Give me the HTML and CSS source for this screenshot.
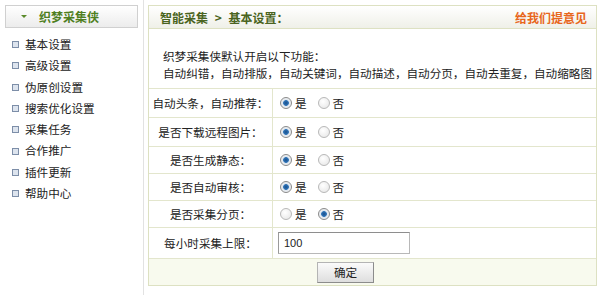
FILE: index.html
```html
<!DOCTYPE html>
<html lang="zh">
<head>
<meta charset="utf-8">
<link rel="stylesheet" href="styles.css">
</head>
<body>
<div class="page">
  <aside class="side">
    <div class="side-head"><span class="arrow"></span><span class="side-title">织梦采集侠</span></div>
    <ul class="menu">
      <li>基本设置</li>
      <li>高级设置</li>
      <li>伪原创设置</li>
      <li>搜索优化设置</li>
      <li>采集任务</li>
      <li>合作推广</li>
      <li>插件更新</li>
      <li>帮助中心</li>
    </ul>
  </aside>
  <main class="panel">
    <div class="panel-head">
      <span class="crumb">智能采集 <span class="sep">&gt;</span> 基本设置：</span>
      <span class="feedback">给我们提意见</span>
    </div>
    <div class="intro">
      <p>织梦采集侠默认开启以下功能：</p>
      <p>自动纠错，自动排版，自动关键词，自动描述，自动分页，自动去重复，自动缩略图</p>
    </div>
    <div class="form">
      <div class="row r29"><div class="label">自动头条，自动推荐：</div><div class="val"><label class="opt"><input type="radio" name="a" checked>是</label><label class="opt"><input type="radio" name="a">否</label></div></div>
      <div class="row r29"><div class="label">是否下载远程图片：</div><div class="val"><label class="opt"><input type="radio" name="b" checked>是</label><label class="opt"><input type="radio" name="b">否</label></div></div>
      <div class="row r27"><div class="label">是否生成静态：</div><div class="val"><label class="opt"><input type="radio" name="c" checked>是</label><label class="opt"><input type="radio" name="c">否</label></div></div>
      <div class="row r27"><div class="label">是否自动审核：</div><div class="val"><label class="opt"><input type="radio" name="d" checked>是</label><label class="opt"><input type="radio" name="d">否</label></div></div>
      <div class="row r27"><div class="label">是否采集分页：</div><div class="val"><label class="opt"><input type="radio" name="e">是</label><label class="opt"><input type="radio" name="e" checked>否</label></div></div>
      <div class="row r31"><div class="label">每小时采集上限：</div><div class="val"><input class="txt" type="text" value="100"></div></div>
      <div class="row r27 foot"><div class="label"></div><div class="val"><button class="btn" type="button">确定</button></div></div>
    </div>
  </main>
</div>
</body>
</html>
```
FILE: styles.css
```css
* { box-sizing: border-box; }
html, body { margin: 0; padding: 0; background: #fff; }
body {
  width: 600px;
  height: 295px;
  overflow: hidden;
  font-family: "Noto Sans CJK SC", "Noto Sans", sans-serif;
  font-size: 11.6px;
  color: #222;
}
.page { display: flex; height: 295px; }

.side {
  width: 144px;
  padding: 5px 5px 0 5px;
  border-right: 1px solid #e2e2e2;
  flex: none;
}
.side-head {
  width: 133px;
  height: 23px;
  border: 1px solid #d0d0d0;
  background: linear-gradient(#ffffff, #ececec);
  display: flex;
  align-items: center;
  padding-left: 15px;
}
.arrow {
  width: 0; height: 0;
  border-left: 3px solid transparent;
  border-right: 3px solid transparent;
  border-top: 3px solid #5a8a2a;
  margin-right: 12px;
}
.side-title { font-weight: bold; color: #4f7f1f; font-size: 12px; }
.menu { list-style: none; margin: 6px 0 0 0; padding: 0; }
.menu li {
  height: 21.3px;
  line-height: 21.3px;
  display: flex;
  align-items: center;
  color: #222;
}
.menu li::before {
  content: "";
  width: 5px; height: 5px;
  border: 1px solid #7d8ea8;
  background: #dde4ee;
  margin: 0 6px 0 7px;
  flex: none;
}

.panel {
  margin: 5px 0 0 4px;
  width: 449px;
  height: 281px;
  border: 1px solid #dde1c2;
  display: flex;
  flex-direction: column;
}
.panel-head {
  height: 23px;
  border-bottom: 1px solid #dde1c2;
  background: linear-gradient(#ffffff, #eff0e8);
  display: flex;
  align-items: center;
  justify-content: space-between;
  padding: 0 9px 0 11px;
  font-weight: bold;
  font-size: 12px;
}
.crumb { color: #4a6420; }
.sep { margin: 0 4px; }
.feedback { color: #e8661c; }

.intro { padding: 19px 0 5px 14px; height: 59px; }
.intro p { margin: 0; line-height: 17px; }

.form { display: flex; flex-direction: column; }
.row {
  display: grid;
  grid-template-columns: 124px 1fr;
  border-top: 1px solid #e3e6cd;
}
.r29 { height: 29px; }
.r27 { height: 27px; }
.r31 { height: 31px; }
.label {
  border-right: 1px solid #e3e6cd;
  display: flex; align-items: center; justify-content: center;
  white-space: nowrap;
}
.val { display: flex; align-items: center; padding-left: 7px; }
.opt { display: flex; align-items: center; margin-right: 11px; }
.opt input {
  appearance: none;
  -webkit-appearance: none;
  width: 12px; height: 12px;
  margin: 0 3px 0 0;
  border-radius: 50%;
  border: 1px solid #b8b8b8;
  background: radial-gradient(circle at 40% 35%, #ffffff, #e4e4e4);
}
.opt input:checked {
  border-color: #8a8a8a;
  background: radial-gradient(circle at 50% 50%, #1a4f8a 0, #2f74b8 2.5px, #dfe6ee 3.2px, #f4f4f4 6px);
}
.txt {
  width: 132px; height: 22px;
  margin-left: -2px;
  border: 1px solid #b8b8b8;
  border-top-color: #8e8e8e;
  border-left-color: #9a9a9a;
  padding: 0 5px;
  font-family: "Liberation Sans", sans-serif;
  font-size: 11px;
  color: #222;
}
.foot { background: #f8faee; }
.foot .label { border-right: none; }
.btn {
  margin-left: 37px;
  width: 57px; height: 21px;
  border: 1px solid #b4b4b4;
  border-right-color: #8c8c8c;
  border-bottom-color: #8c8c8c;
  background: linear-gradient(#fbfbfb, #dedede);
  font-family: "Noto Sans CJK SC", sans-serif;
  font-size: 11.6px;
  color: #222;
  padding: 0;
}
```
